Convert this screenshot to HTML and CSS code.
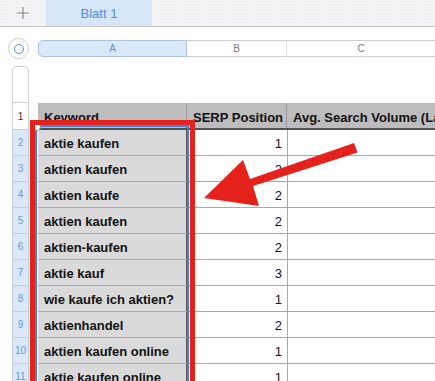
FILE: index.html
```html
<!DOCTYPE html>
<html>
<head>
  <meta charset="UTF-8">
  <title>Blatt 1</title>
  <link rel="stylesheet" href="styles.css">
</head>
<body>

<div class="tabs">
  <div class="add">
    <svg width="14" height="14" viewBox="0 0 14 14"><path d="M7 1V13M1 7H13" stroke="#8a8a8a" stroke-width="1.2"/></svg>
  </div>
  <div class="tab">Blatt 1</div>
</div>

<div class="sheet">
  <div class="colbar">
    <div class="selall"><span></span></div>
    <div class="colhead first">A</div>
    <div class="colhead">B</div>
    <div class="colhead last">C</div>
  </div>

  <div class="body">
    <div class="rowheads">
      <div class="rh top"></div>
      <div class="rh head">1</div>
      <div class="rh sel">2</div>
      <div class="rh sel">3</div>
      <div class="rh sel">4</div>
      <div class="rh sel">5</div>
      <div class="rh sel">6</div>
      <div class="rh sel">7</div>
      <div class="rh sel">8</div>
      <div class="rh sel">9</div>
      <div class="rh sel">10</div>
      <div class="rh sel">11</div>
    </div>

    <div class="table">
      <div class="spacer"></div>
      <div class="row header">
        <div class="cell">Keyword</div>
        <div class="cell">SERP Position</div>
        <div class="cell wide">Avg. Search Volume (Last 12 months)</div>
      </div>
      <div class="row"><div class="cell kw">aktie kaufen</div><div class="cell num">1</div><div class="cell wide"></div></div>
      <div class="row"><div class="cell kw">aktien kaufen</div><div class="cell num">2</div><div class="cell wide"></div></div>
      <div class="row"><div class="cell kw">aktien kaufe</div><div class="cell num">2</div><div class="cell wide"></div></div>
      <div class="row"><div class="cell kw">aktien kaufen</div><div class="cell num">2</div><div class="cell wide"></div></div>
      <div class="row"><div class="cell kw">aktien-kaufen</div><div class="cell num">2</div><div class="cell wide"></div></div>
      <div class="row"><div class="cell kw">aktie kauf</div><div class="cell num">3</div><div class="cell wide"></div></div>
      <div class="row"><div class="cell kw">wie kaufe ich aktien?</div><div class="cell num">1</div><div class="cell wide"></div></div>
      <div class="row"><div class="cell kw">aktienhandel</div><div class="cell num">2</div><div class="cell wide"></div></div>
      <div class="row"><div class="cell kw">aktien kaufen online</div><div class="cell num">1</div><div class="cell wide"></div></div>
      <div class="row"><div class="cell kw">aktie kaufen online</div><div class="cell num">1</div><div class="cell wide"></div></div>
    </div>
  </div>
</div>

<!-- selection + annotations laid over the sheet -->
<div class="selection"><span class="handle"></span></div>
<div class="callout"></div>
<svg class="arrow" width="435" height="381" viewBox="0 0 435 381">
  <polygon points="204,198 243,160 250,179 354,143 357.5,152.5 253,186 259,206" fill="#e5211c"/>
</svg>

</body>
</html>
```

FILE: styles.css
```css
html, body {
	margin: 0;
	padding: 0;
	height: 381px;
	overflow: hidden;
	background: #fff;
	font-family: "Liberation Sans", Arial, sans-serif;
}

.tabs {
	display: flex;
	height: 26px;
	border-bottom: 1px solid #c9c9c9;
	background-color: #f4f4f6;
	background-image: radial-gradient(#e6e6ea 0.6px, transparent 0.7px);
	background-size: 3px 3px;
}
.add {
	width: 46px;
	display: flex;
	align-items: center;
	justify-content: center;
}
.tab {
	width: 106px;
	background: #d6e5f7;
	color: #4a8fe2;
	font-size: 13px;
	display: flex;
	align-items: center;
	justify-content: center;
}

.sheet {
	padding: 13px 0 0 8px;
}

.colbar {
	display: flex;
	align-items: center;
	height: 17px;
}
.selall {
	width: 21px;
	height: 21px;
	box-sizing: border-box;
	border: 1px solid #cfcfcf;
	border-radius: 50%;
	margin-right: 9px;
	display: flex;
	align-items: center;
	justify-content: center;
	box-shadow: 0 0 1px rgba(0,0,0,0.1);
}
.selall span {
	width: 10px;
	height: 10px;
	box-sizing: border-box;
	border: 1.6px solid #4a8fe2;
	border-radius: 50%;
}
.colhead {
	height: 17px;
	box-sizing: border-box;
	width: 100px;
	border-top: 1px solid #cfcfcf;
	border-bottom: 1px solid #cfcfcf;
	border-right: 1px solid #e2e2e2;
	font-size: 10px;
	color: #7a7a7a;
	display: flex;
	align-items: center;
	justify-content: center;
}
.colhead.first {
	width: 149px;
	background: #dbe8f9;
	border: 1px solid #a8c3e6;
	border-radius: 5px 0 0 5px;
	color: #5a8fd6;
}
.colhead.last {
	flex: 1;
	border-right: 0;
}

.body {
	display: flex;
	margin-top: 9px;
}

.rowheads {
	width: 17px;
	margin-left: 4px;
	margin-right: 9px;
	border: 1px solid #cfcfcf;
	border-bottom: 0;
	border-radius: 5px 5px 0 0;
	box-sizing: border-box;
	overflow: hidden;
}
.rh {
	height: 26px;
	box-sizing: border-box;
	border-bottom: 1px solid #cfcfcf;
	font-size: 10px;
	color: #333;
	display: flex;
	align-items: center;
	justify-content: center;
}
.rh.top {
	height: 36px;
}
.rh.head {
	height: 27px;
}
.rh.sel {
	background: #dbe8f9;
	color: #5b9ae8;
	border-bottom-color: #b9cfea;
}

.table {
	flex: 1;
}
.spacer {
	height: 37px;
}
.row {
	display: grid;
	grid-template-columns: 149px 100px 1fr;
	height: 26px;
	box-sizing: border-box;
	border-bottom: 1px solid #a8a8a8;
	font-size: 13px;
	color: #111;
}
.row.header {
	height: 27px;
	border-bottom: 2px solid #505050;
	background: #bdbdbd;
	font-weight: bold;
}
.cell {
	display: flex;
	align-items: center;
	padding: 1px 5px 0 6px;
	white-space: nowrap;
	overflow: hidden;
}
.row.header .cell {
	padding-top: 3px;
	border-right: 1px solid #999;
}
.cell.kw {
	background: #dadada;
	font-weight: bold;
	border-right: 1px solid #5a5a5a;
}
.cell.num {
	justify-content: flex-end;
}
.cell.wide {
	border-left: 1px solid #a8a8a8;
}
.row.header .cell.wide {
	border-left: 0;
	border-right: 0;
}

.selection {
	position: absolute;
	left: 35px;
	top: 125px;
	width: 150px;
	height: 300px;
	border: 2px solid #3f80d8;
	border-bottom: 0;
}
.handle {
	position: absolute;
	left: -4px;
	top: -4px;
	width: 6px;
	height: 6px;
	border-radius: 50%;
	background: #fff;
	border: 1px solid #8a8a8a;
}
.callout {
	position: absolute;
	left: 30px;
	top: 120px;
	width: 155px;
	height: 300px;
	border: 5px solid #e5211c;
	border-bottom: 0;
}
.arrow {
	position: absolute;
	left: 0;
	top: 0;
	pointer-events: none;
}
```
